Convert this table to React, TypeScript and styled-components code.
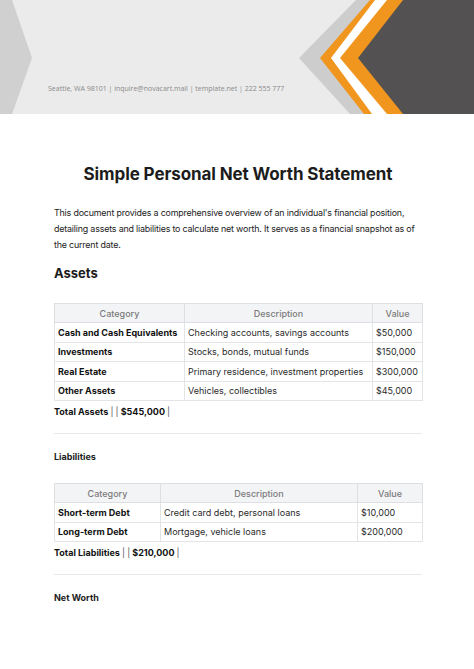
import React from "react";
import styled, { createGlobalStyle } from "styled-components";

const Global = createGlobalStyle`
  html, body { margin: 0; padding: 0; background: #ffffff; }
  body { font-family: Inter, "Noto Sans", sans-serif; color: #1a1a1a; }
  * { box-sizing: border-box; }
`;

const Page = styled.div`
  width: 474px;
  min-height: 669px;
  background: #ffffff;
`;

const Header = styled.header`
  position: relative;
  height: 114px;
  background: #ebebeb;
  overflow: hidden;
  display: flex;
  align-items: flex-end;
  padding: 0 0 20px 48px;
`;

const HeaderArt = styled.svg`
  position: absolute;
  inset: 0;
  width: 474px;
  height: 114px;
`;

const Contact = styled.div`
  position: relative;
  font-family: "Open Sans", sans-serif;
  font-size: 7px;
  line-height: 10px;
  color: #8a8a8a;
`;

const Body = styled.main`
  padding: 50px 52px 40px 54px;
`;

const Title = styled.h1`
  margin: 0;
  text-align: center;
  font-size: 17px;
  line-height: 20px;
  font-weight: 700;
  color: #1c1c1c;
  letter-spacing: -0.1px;
`;

const Intro = styled.p`
  margin: 21px 0 0;
  font-size: 8.9px;
  line-height: 16px;
  letter-spacing: -0.18px;
  color: #222;
`;

const SectionTitle = styled.h2`
  margin: 12px 0 0;
  font-size: 13px;
  line-height: 16px;
  font-weight: 700;
  color: #1c1c1c;
`;

const SubTitle = styled.h3`
  margin: 16px 0 0;
  font-size: 9px;
  line-height: 14px;
  font-weight: 700;
  color: #1c1c1c;
`;

const Table = styled.table<{ $top: number }>`
  width: 100%;
  margin-top: ${(p) => p.$top}px;
  border-collapse: collapse;
  table-layout: fixed;
  font-size: 9px;
`;

const Col = styled.col<{ $w: number }>`
  width: ${(p) => p.$w}px;
`;

const Th = styled.th`
  background: #f3f4f6;
  color: #7b7b7b;
  font-weight: 500;
  height: 19px;
  padding: 0 3px;
  border: 1px solid #dedfe2;
  text-align: center;
`;

const Td = styled.td<{ $bold?: boolean }>`
  height: 19.5px;
  padding: 0 3px;
  border: 1px solid #e3e4e6;
  font-weight: ${(p) => (p.$bold ? 700 : 400)};
  color: ${(p) => (p.$bold ? "#111" : "#2a2a2a")};
  white-space: nowrap;
`;

const Total = styled.div`
  margin-top: 4px;
  font-size: 9px;
  line-height: 14px;
  font-weight: 700;
  color: #111;
`;

const Pipe = styled.span`
  font-weight: 400;
  color: #555;
`;

const Rule = styled.hr`
  margin: 14px 0 0;
  border: none;
  border-top: 1px solid #e8e8e8;
  height: 0;
`;

type Row = [string, string, string];

const assets: Row[] = [
  ["Cash and Cash Equivalents", "Checking accounts, savings accounts", "$50,000"],
  ["Investments", "Stocks, bonds, mutual funds", "$150,000"],
  ["Real Estate", "Primary residence, investment properties", "$300,000"],
  ["Other Assets", "Vehicles, collectibles", "$45,000"],
];

const liabilities: Row[] = [
  ["Short-term Debt", "Credit card debt, personal loans", "$10,000"],
  ["Long-term Debt", "Mortgage, vehicle loans", "$200,000"],
];

function DataTable({ rows, widths, top }: { rows: Row[]; widths: number[]; top: number }) {
  return (
    <Table $top={top}>
      <colgroup>
        {widths.map((w, i) => (
          <Col key={i} $w={w} />
        ))}
      </colgroup>
      <thead>
        <tr>
          <Th>Category</Th>
          <Th>Description</Th>
          <Th>Value</Th>
        </tr>
      </thead>
      <tbody>
        {rows.map((r) => (
          <tr key={r[0]}>
            <Td $bold>{r[0]}</Td>
            <Td>{r[1]}</Td>
            <Td>{r[2]}</Td>
          </tr>
        ))}
      </tbody>
    </Table>
  );
}

function TotalLine({ label, value }: { label: string; value: string }) {
  return (
    <Total>
      {label} <Pipe>|</Pipe> <Pipe>|</Pipe> {value} <Pipe>|</Pipe>
    </Total>
  );
}

export default function App() {
  return (
    <Page>
      <Global />
      <Header>
        <HeaderArt viewBox="0 0 474 114" aria-hidden="true">
          <polygon points="0,0 12,0 32,58 12,114 0,114" fill="#d0d0d0" />
          <polygon points="356,0 474,0 474,114 350,114 299,58" fill="#cdcdcd" />
          <polygon points="370,0 474,0 474,114 364,114 320,58" fill="#f0961e" />
          <polygon points="375,0 474,0 474,114 372,114 331,58" fill="#ffffff" />
          <polygon points="387,0 474,0 474,114 387,114 340,58" fill="#f0961e" />
          <polygon points="403,0 474,0 474,114 403,114 358,58" fill="#535152" />
        </HeaderArt>
        <Contact>Seattle, WA 98101 | inquire@novacart.mail | template.net | 222 555 777</Contact>
      </Header>
      <Body>
        <Title>Simple Personal Net Worth Statement</Title>
        <Intro>
          This document provides a comprehensive overview of an individual's financial position,
          detailing assets and liabilities to calculate net worth. It serves as a financial snapshot as
          of the current date.
        </Intro>
        <SectionTitle>Assets</SectionTitle>
        <DataTable rows={assets} widths={[130, 188, 50]} top={22} />
        <TotalLine label="Total Assets" value="$545,000" />
        <Rule />
        <SubTitle>Liabilities</SubTitle>
        <DataTable rows={liabilities} widths={[106, 197, 65]} top={19} />
        <TotalLine label="Total Liabilities" value="$210,000" />
        <Rule />
        <SubTitle>Net Worth</SubTitle>
      </Body>
    </Page>
  );
}
